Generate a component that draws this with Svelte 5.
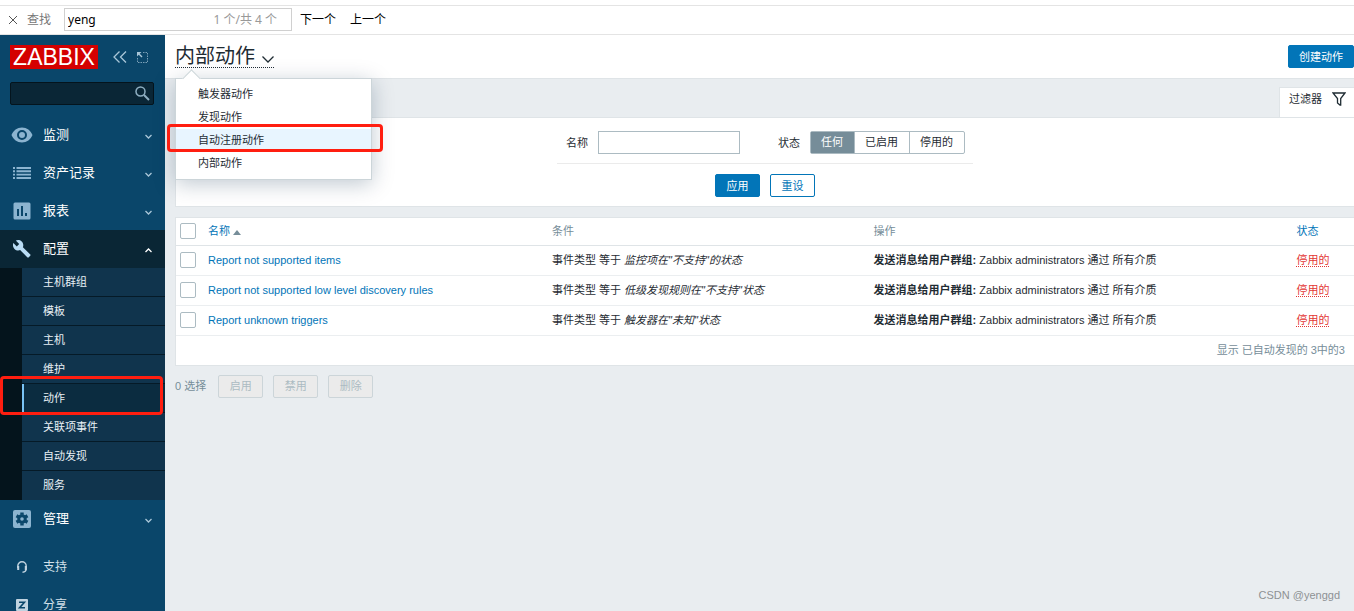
<script lang="ts">
  interface NavItem {
    label: string;
    icon: string;
    open?: boolean;
    children?: string[];
  }

  const nav: NavItem[] = [
    { label: '监测', icon: 'eye' },
    { label: '资产记录', icon: 'list' },
    { label: '报表', icon: 'report' },
    {
      label: '配置',
      icon: 'wrench',
      open: true,
      children: ['主机群组', '模板', '主机', '维护', '动作', '关联项事件', '自动发现', '服务'],
    },
    { label: '管理', icon: 'gear' },
  ];

  const links = [
    { label: '支持', icon: 'support' },
    { label: '分享', icon: 'share' },
  ];

  const sources = ['触发器动作', '发现动作', '自动注册动作', '内部动作'];
  const marked = '自动注册动作';
  const current = '动作';

  const statuses = ['任何', '已启用', '停用的'];
  let status = $state('任何');
  let name = $state('');
  let find = $state('yeng');

  const actions = [
    { name: 'Report not supported items', event: '监控项在"不支持"的状态' },
    { name: 'Report not supported low level discovery rules', event: '低级发现规则在"不支持"状态' },
    { name: 'Report unknown triggers', event: '触发器在"未知"状态' },
  ];

  const bulk = ['启用', '禁用', '删除'];
</script>

{#snippet icon(kind: string)}
  {#if kind === 'eye'}
    <svg width="22" height="16" viewBox="0 0 22 16" aria-hidden="true">
      <path fill="currentColor" fill-rule="evenodd" d="M11 .5C6.2.5 2.2 3.5.5 8c1.7 4.500 5.700 7.500 10.500 7.500S19.800 12.500 21.500 8C19.800 3.500 15.800.5 11 .5zM11 13a5 5 0 1 1 0-10 5 5 0 0 1 0 10zm0-2a3 3 0 1 0 0-6 3 3 0 0 0 0 6z" />
    </svg>
  {:else if kind === 'list'}
    <svg width="18" height="12" viewBox="0 0 18 12" aria-hidden="true">
      <path stroke="currentColor" stroke-width="1.9" d="M0 1h2M3.500 1H18M0 4.300h2M3.500 4.300H18M0 7.600h2M3.500 7.600H18M0 11h2M3.500 11H18" />
    </svg>
  {:else if kind === 'report'}
    <svg width="18" height="18" viewBox="0 0 18 18" aria-hidden="true">
      <path fill="currentColor" fill-rule="evenodd" d="M2 .5h14A1.500 1.500 0 0 1 17.500 2v14a1.500 1.500 0 0 1-1.500 1.500H2A1.500 1.500 0 0 1 .5 16V2A1.500 1.500 0 0 1 2 .5zM4 7v7h2V7zm4-3v10h2V4zm4 7v3h2v-3z" />
    </svg>
  {:else if kind === 'wrench'}
    <svg width="18" height="18" viewBox="0 0 18 18" aria-hidden="true">
      <path fill="currentColor" d="M17.300 14.600 9.900 7.200c.8-1.900.4-4.100-1.200-5.600C7.100 0 4.700-.3 2.800.6l3.400 3.400-2.400 2.400L.4 3.100c-.9 1.900-.5 4.200 1.100 5.800 1.500 1.500 3.800 1.900 5.600 1.200l7.400 7.300c.3.300.8.3 1.100 0l1.800-1.800c.3-.3.3-.8-.1-1z" />
    </svg>
  {:else if kind === 'gear'}
    <svg width="18" height="18" viewBox="0 0 18 18" aria-hidden="true">
      <rect width="18" height="18" rx="2" fill="currentColor" />
      <circle cx="9" cy="9" r="3.300" class="cut" stroke-width="3" />
      <path class="cut" stroke-width="3.400" d="M9 2.600v2.200M9 13.200v2.200M3.500 5.800l1.900 1.100M12.600 11.100l1.900 1.100M3.500 12.200l1.900-1.100M12.600 6.900l1.900-1.100" />
    </svg>
  {:else if kind === 'support'}
    <svg width="12" height="12" viewBox="0 0 12 12" fill="none" stroke="currentColor" aria-hidden="true">
      <path stroke-width="1.400" d="M1.800 7V5a4.200 4.200 0 0 1 8.400 0v2.500c0 2-1 3.700-3.700 3.700" />
      <path stroke-width="2" d="M2.200 5v4M9.800 5v4" />
    </svg>
  {:else}
    <svg width="12" height="12" viewBox="0 0 12 12" aria-hidden="true">
      <rect width="12" height="12" rx="1" fill="currentColor" />
      <path class="cut" stroke-width="1.600" d="M3 3.300h5.400L3.600 8.700H9" />
    </svg>
  {/if}
{/snippet}

<div class="page">
  <form class="find">
    <button type="button" class="close" aria-label="关闭">
      <svg width="8" height="8" viewBox="0 0 8 8"><path d="M0 0l8 8M8 0L0 8" stroke="#555" /></svg>
    </button>
    <label for="find">查找</label>
    <div class="find-box">
      <input id="find" type="text" bind:value={find} />
      <span>1 个/共 4 个</span>
    </div>
    <button type="button">下一个</button>
    <button type="button">上一个</button>
  </form>

  <div class="app">
    <aside>
      <div class="brand">
        <a href="#home" class="logo">ZABBIX</a>
        <button type="button" aria-label="收起">
          <svg width="14" height="12" viewBox="0 0 14 12"><path d="M6.500.5 1 6l5.500 5.500M13 .5 7.500 6l5.500 5.500" fill="none" stroke="currentColor" stroke-width="1.300" /></svg>
        </button>
        <button type="button" aria-label="隐藏">
          <svg width="13" height="13" viewBox="0 0 13 13" fill="none" stroke="currentColor">
            <path d="M7 1.500h4.500v10h-10V7" stroke-dasharray="1.500 1" opacity=".7" />
            <path d="M1 5.500V1h4.500z" fill="currentColor" stroke="none" />
            <path d="M2 2l4 4" stroke-width="1.500" />
          </svg>
        </button>
      </div>

      <div class="search">
        <input type="text" aria-label="搜索" />
        <svg width="15" height="15" viewBox="0 0 15 15" fill="none" stroke="currentColor" aria-hidden="true">
          <circle cx="5.500" cy="5.500" r="4.500" stroke-width="1.500" />
          <path d="M9 9l5 5" stroke-width="2" />
        </svg>
      </div>

      <nav>
        {#each nav as item (item.label)}
          <a href="#menu" class="item" class:open={item.open}>
            <span class="icon">{@render icon(item.icon)}</span>
            {item.label}
            <svg class="arrow" width="7" height="5" viewBox="0 0 7 5" aria-hidden="true">
              <path d={item.open ? 'M.5 4l3-3 3 3' : 'M.5 1l3 3 3-3'} />
            </svg>
          </a>
          {#if item.children}
            <div class="sub">
              {#each item.children as child (child)}
                <a href="#sub" class:current={child === current}>{child}</a>
              {/each}
            </div>
          {/if}
        {/each}
      </nav>

      <div class="links">
        {#each links as link (link.label)}
          <a href="#link" class="item">
            <span class="icon">{@render icon(link.icon)}</span>
            {link.label}
          </a>
        {/each}
      </div>
    </aside>

    <main>
      <header>
        <div class="title">
          <h1>
            <button type="button">
              内部动作
              <svg width="12" height="7" viewBox="0 0 12 7" aria-hidden="true"><path d="M.5.5 6 6 11.500.5" fill="none" stroke="currentColor" stroke-width="1.300" /></svg>
            </button>
          </h1>
          <div class="menu">
            {#each sources as source (source)}
              <a href="#source" class:marked={source === marked}>{source}</a>
            {/each}
          </div>
        </div>
        <button type="button" class="btn primary">创建动作</button>
      </header>

      <div class="content">
        <a href="#filter" class="filter-tab">
          过滤器
          <svg width="14" height="14" viewBox="0 0 14 14" aria-hidden="true"><path d="M1 1h12L8.700 6.500V13H8L5.500 11V6.500z" fill="none" stroke="currentColor" stroke-width="1.300" /></svg>
        </a>

        <form class="panel filter">
          <div class="fields">
            <label for="name">名称</label>
            <input id="name" type="text" bind:value={name} />
            <fieldset>
              <legend>状态</legend>
              <div class="segments">
                {#each statuses as s (s)}
                  <label class:on={status === s}>
                    <input type="radio" name="status" value={s} bind:group={status} />
                    {s}
                  </label>
                {/each}
              </div>
            </fieldset>
          </div>
          <div class="buttons">
            <button type="button" class="btn primary">应用</button>
            <button type="button" class="btn">重设</button>
          </div>
        </form>

        <div class="panel">
          <table>
            <thead>
              <tr>
                <th class="check"><input type="checkbox" aria-label="全选" /></th>
                <th class="name"><a href="#sort">名称<i class="asc"></i></a></th>
                <th class="cond">条件</th>
                <th class="ops">操作</th>
                <th><a href="#sort">状态</a></th>
              </tr>
            </thead>
            <tbody>
              {#each actions as action (action.name)}
                <tr>
                  <td class="check"><input type="checkbox" aria-label={action.name} /></td>
                  <td><a href="#action">{action.name}</a></td>
                  <td>事件类型 等于 <em>{action.event}</em></td>
                  <td><b>发送消息给用户群组:</b> Zabbix administrators 通过 所有介质</td>
                  <td><a href="#status" class="disabled">停用的</a></td>
                </tr>
              {/each}
            </tbody>
          </table>
          <div class="total">显示 已自动发现的 3中的3</div>
        </div>

        <div class="bulk">
          <span>0 选择</span>
          {#each bulk as label (label)}
            <button type="button" class="btn" disabled>{label}</button>
          {/each}
        </div>
      </div>
    </main>
  </div>

  <div class="credit">CSDN @yenggd</div>
</div>

<style>
  :global(body) { margin: 0; }
  .page, .page * { box-sizing: border-box; }
  .page {
    position: relative;
    display: flex;
    flex-direction: column;
    height: 100vh;
    overflow: hidden;
    font: 11px/16px "Liberation Sans", "Noto Sans CJK SC", sans-serif;
    color: #1f2c33;
    background: #e9edf0;
  }
  a { color: #0275b8; text-decoration: none; }
  button, input { font: inherit; color: inherit; }
  button { padding: 0; border: 0; background: none; }
  input { margin: 0; outline: 0; }
  svg { display: block; flex: none; }

  /* find bar */
  .find {
    flex: none;
    display: flex;
    align-items: center;
    height: 35px;
    padding: 5px 8px 0;
    background: linear-gradient(#e4e4e4, #e4e4e4) 0 5px / 100% 1px no-repeat #fff;
    border-bottom: 1px solid #e4e4e4;
    font-family: "Noto Sans", "Noto Sans CJK SC", sans-serif;
    font-size: 12px;
    color: #000;
  }
  .find label { margin: 0 13px 0 10px; color: #777; }
  .find button { margin-left: 8px; }
  .find .close { margin-left: 1px; }
  .find button + button { margin-left: 14px; }
  .find-box {
    display: flex;
    align-items: center;
    width: 228px;
    height: 23px;
    padding: 0 14px 0 3px;
    border: 1px solid #d0d0d0;
  }
  .find-box input { flex: 1; min-width: 0; padding: 0; border: 0; }
  .find-box span { color: #999; }

  .app { flex: 1; display: flex; min-height: 0; }

  /* sidebar */
  aside {
    flex: none;
    width: 165px;
    overflow: hidden;
    background: #0a466a;
    color: #fff;
  }
  .brand { display: flex; align-items: center; padding: 10px 10px 13px; color: #a9c6d8; }
  .logo {
    width: 88px;
    margin-right: 15px;
    background: #d40000;
    color: #fff;
    font-size: 23px;
    line-height: 24px;
    text-align: center;
  }
  .brand button + button { margin-left: 9px; }
  .search {
    display: flex;
    align-items: center;
    height: 23px;
    margin: 0 11px 11px 10px;
    padding-right: 3px;
    border: 1px solid #04141d;
    border-radius: 2px;
    background: #0a2636;
    color: #8fafc2;
  }
  .search input { flex: 1; min-width: 0; border: 0; background: none; }

  .item {
    display: flex;
    align-items: center;
    height: 38px;
    padding-right: 13px;
    color: #fff;
    font-size: 13px;
  }
  .icon { display: flex; justify-content: center; width: 43px; color: #8cb4d0; }
  .item .cut { fill: none; stroke: #0a466a; }
  .arrow { margin: 2px 0 0 auto; fill: none; stroke: #a9c6d8; stroke-width: 1.3; }
  .open { background: #0a2635; }
  .open .icon { color: #b9dcf5; }
  .open .arrow { stroke: #fff; }

  .sub {
    padding-left: 22px;
    background: #04141c;
  }
  .sub a {
    position: relative;
    display: block;
    height: 29px;
    padding-left: 21px;
    border-bottom: 1px solid #051a27;
    background: #10344d;
    color: #e8f0f5;
    line-height: 29px;
  }
  .sub a:last-child { border-bottom: 0; }
  .sub .current { z-index: 1; padding-left: 19px; border-left: 2px solid #79c3f5; background: #0b2c40; }
  .links { padding-top: 10px; }
  .links .item { font-size: 12px; color: #d3e0e9; }
  .links .icon { color: #c0d3e0; }

  /* hand-drawn marks over the menus */
  .sub .current::after, .menu .marked::after {
    content: "";
    position: absolute;
    border: 3px solid #ff1e10;
    border-radius: 4px;
  }
  .sub .current::after { inset: -8px 2px -3px -24px; }
  .menu .marked::after { inset: -5px -12px 0 -9px; }

  main { flex: 1; min-width: 0; }
  header {
    display: flex;
    justify-content: space-between;
    align-items: center;
    height: 44px;
    padding-left: 10px;
    border-bottom: 1px solid #dfe4e7;
    background: #fff;
  }
  .title { position: relative; z-index: 1; }
  h1 { margin: 0; font-weight: normal; }
  h1 button {
    display: flex;
    align-items: center;
    gap: 7px;
    border-bottom: 1px dotted #1f2c33;
    font-size: 20px;
    line-height: 22px;
  }
  h1 svg { margin-top: 6px; }
  .menu {
    position: absolute;
    top: 33px;
    left: 0;
    width: 197px;
    padding: 4px 0;
    border: 1px solid #ccd5d9;
    background: #fff;
    box-shadow: 0 4px 20px rgba(0, 40, 70, 0.25);
  }
  .menu::before {
    content: "";
    position: absolute;
    top: -7px;
    left: 9px;
    width: 12px;
    height: 12px;
    border: solid #ccd5d9;
    border-width: 1px 0 0 1px;
    background: #fff;
    transform: rotate(45deg);
  }
  .menu a {
    position: relative;
    display: block;
    padding-left: 22px;
    color: #1f2c33;
    line-height: 23px;
  }
  .menu .marked { background: #e8f5ff; }

  .btn {
    min-width: 45px;
    height: 23px;
    padding: 0 10px;
    border: 1px solid #0275b8;
    border-radius: 2px;
    background: #fff;
    color: #0275b8;
  }
  .primary { background: #0275b8; color: #fff; }
  .btn:disabled { border-color: #ccd5d9; background: #ebebeb; color: #acbbc2; }

  .content { display: flex; flex-direction: column; padding: 8px 0 0 10px; }
  .panel { border: 1px solid #dfe4e7; border-right: 0; background: #fff; }
  .filter-tab {
    display: flex;
    align-items: center;
    align-self: flex-end;
    gap: 10px;
    height: 30px;
    padding: 0 8px 8px 9px;
    border: 1px solid #dfe4e7;
    border-width: 1px 0 0 1px;
    background: #fff;
    color: #1f2c33;
  }
  .filter {
    display: flex;
    flex-direction: column;
    align-items: center;
    margin-bottom: 10px;
    padding: 13px 0 9px;
  }
  .fields {
    display: flex;
    align-items: center;
    padding: 0 8px 9px 9px;
    border-bottom: 1px solid #ebebeb;
  }
  .fields > input {
    width: 142px;
    height: 23px;
    margin: 0 38px 0 10px;
    border: 1px solid #acbbc2;
  }
  fieldset { display: flex; align-items: center; margin: 0; padding: 0; border: 0; }
  legend { float: left; padding: 0; }
  .segments {
    display: flex;
    height: 23px;
    margin-left: 10px;
    border: 1px solid #acbbc2;
    border-radius: 2px;
  }
  .segments label { position: relative; padding: 0 11px 0 10px; line-height: 21px; }
  .segments label + label { border-left: 1px solid #acbbc2; }
  .segments .on { background: #768d99; color: #fff; }
  .segments input { position: absolute; opacity: 0; }
  .buttons { display: flex; gap: 10px; margin-top: 10px; }

  /* actions list */
  table { width: 100%; border-collapse: collapse; table-layout: fixed; }
  th, td { height: 30px; padding: 0 5px; border-bottom: 1px solid #ebeef0; text-align: left; white-space: nowrap; }
  th { height: 27px; border-color: #dfe4e7; color: #768d99; font-weight: normal; }
  .check { width: 27px; padding: 0 0 0 4px; }
  .name { width: 29.2%; }
  .cond { width: 27.3%; }
  .ops { width: 35.9%; }
  .check input {
    display: block;
    appearance: none;
    width: 16px;
    height: 16px;
    border: 1px solid #acbbc2;
    border-radius: 2px;
    background: #fff;
  }
  .asc {
    display: inline-block;
    margin-left: 3px;
    border: solid transparent;
    border-width: 0 4px 5px;
    border-bottom-color: #768d99;
  }
  .disabled { border-bottom: 1px dotted #e33734; color: #e33734; }
  .total { padding-right: 9px; color: #768d99; line-height: 29px; text-align: right; }
  .bulk { display: flex; align-items: center; margin-top: 9px; color: #768d99; }
  .bulk .btn { margin-right: 10px; }
  .bulk span { margin-right: 12px; }

  .credit {
    position: absolute;
    right: 14px;
    bottom: 8px;
    font-size: 11px;
    color: #8d9194;
  }
</style>
